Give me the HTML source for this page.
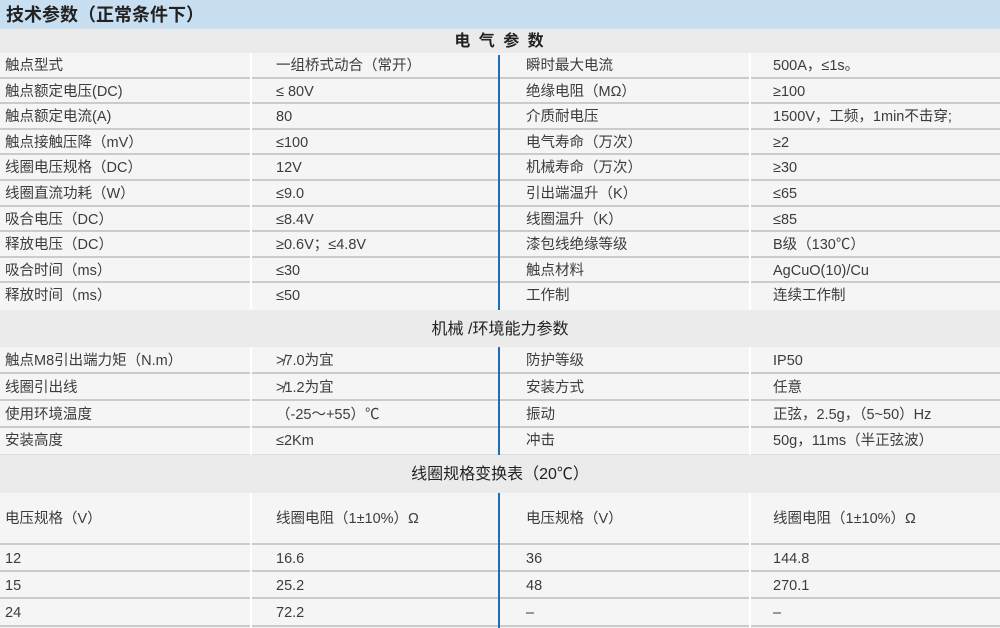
<!DOCTYPE html>
<html><head><meta charset="utf-8"><style>
*{margin:0;padding:0;box-sizing:border-box}
body{width:1000px;height:628px;background:#f5f5f5;font-family:"Liberation Sans","Noto Sans CJK SC",sans-serif;color:#3c3c3c;font-size:14.5px;position:relative;overflow:hidden}
.title{position:absolute;left:0;top:0;width:1000px;height:29px;background:#c8dff2;font-weight:bold;font-size:18px;color:#222;padding-left:6px;line-height:30px}
.hd{position:absolute;left:0;width:1000px;background:#ebebeb;font-size:16px;color:#222;text-align:center}
.sec{position:absolute;left:0;width:1000px}
.r{position:relative;border-bottom:2px solid #cbcbcb;background:#f5f5f5}
.r span{position:absolute;top:0;white-space:nowrap}
.c1{left:5px}.c2{left:276px}.c3{left:526px}.c4{left:773px}
.vl{position:absolute;width:2px;background:#fff}
.bl{position:absolute;left:498px;width:2px;background:#1f6db5}
</style></head><body>
<div class="title">技术参数（正常条件下）</div>
<div class="hd" style="top:29px;height:24px;line-height:26px;letter-spacing:2px;font-weight:bold">电 气 参 数</div>
<div class="sec" style="top:53px">
<div class="r" style="height:25.6px;line-height:26px"><span class="c1">触点型式</span><span class="c2">一组桥式动合（常开）</span><span class="c3">瞬时最大电流</span><span class="c4">500A，≤1s。</span></div>
<div class="r" style="height:25.6px;line-height:26px"><span class="c1">触点额定电压(DC)</span><span class="c2">≤ 80V</span><span class="c3">绝缘电阻（MΩ）</span><span class="c4">≥100</span></div>
<div class="r" style="height:25.6px;line-height:26px"><span class="c1">触点额定电流(A)</span><span class="c2">80</span><span class="c3">介质耐电压</span><span class="c4">1500V，工频，1min不击穿;</span></div>
<div class="r" style="height:25.6px;line-height:26px"><span class="c1">触点接触压降（mV）</span><span class="c2">≤100</span><span class="c3">电气寿命（万次）</span><span class="c4">≥2</span></div>
<div class="r" style="height:25.6px;line-height:26px"><span class="c1">线圈电压规格（DC）</span><span class="c2">12V</span><span class="c3">机械寿命（万次）</span><span class="c4">≥30</span></div>
<div class="r" style="height:25.6px;line-height:26px"><span class="c1">线圈直流功耗（W）</span><span class="c2">≤9.0</span><span class="c3">引出端温升（K）</span><span class="c4">≤65</span></div>
<div class="r" style="height:25.6px;line-height:26px"><span class="c1">吸合电压（DC）</span><span class="c2">≤8.4V</span><span class="c3">线圈温升（K）</span><span class="c4">≤85</span></div>
<div class="r" style="height:25.6px;line-height:26px"><span class="c1">释放电压（DC）</span><span class="c2">≥0.6V；≤4.8V</span><span class="c3">漆包线绝缘等级</span><span class="c4">B级（130℃）</span></div>
<div class="r" style="height:25.6px;line-height:26px"><span class="c1">吸合时间（ms）</span><span class="c2">≤30</span><span class="c3">触点材料</span><span class="c4">AgCuO(10)/Cu</span></div>
<div class="r" style="height:25.6px;line-height:26px;border-bottom:none"><span class="c1">释放时间（ms）</span><span class="c2">≤50</span><span class="c3">工作制</span><span class="c4">连续工作制</span></div>
</div>
<div class="vl" style="left:250px;top:53px;height:257px"></div>
<div class="vl" style="left:749px;top:53px;height:257px"></div>
<div class="bl" style="top:55px;height:255px"></div>
<div class="hd" style="top:310px;height:37px;line-height:40px">机械 /环境能力参数</div>
<div class="sec" style="top:347px">
<div class="r" style="height:27px;line-height:28px"><span class="c1">触点M8引出端力矩（N.m）</span><span class="c2">≯7.0为宜</span><span class="c3">防护等级</span><span class="c4">IP50</span></div>
<div class="r" style="height:27px;line-height:28px"><span class="c1">线圈引出线</span><span class="c2">≯1.2为宜</span><span class="c3">安装方式</span><span class="c4">任意</span></div>
<div class="r" style="height:27px;line-height:28px"><span class="c1">使用环境温度</span><span class="c2">（-25～+55）℃</span><span class="c3">振动</span><span class="c4">正弦，2.5g，（5~50）Hz</span></div>
<div class="r" style="height:27px;line-height:26px;border-bottom:1px solid #ddd"><span class="c1">安装高度</span><span class="c2">≤2Km</span><span class="c3">冲击</span><span class="c4">50g，11ms（半正弦波）</span></div>
</div>
<div class="vl" style="left:250px;top:347px;height:108px"></div>
<div class="vl" style="left:749px;top:347px;height:108px"></div>
<div class="bl" style="top:347px;height:108px"></div>
<div class="hd" style="top:455px;height:38px;line-height:40px">线圈规格变换表（20℃）</div>
<div class="sec" style="top:493px">
<div class="r" style="height:52px;line-height:52px"><span class="c1">电压规格（V）</span><span class="c2">线圈电阻（1±10%）Ω</span><span class="c3">电压规格（V）</span><span class="c4">线圈电阻（1±10%）Ω</span></div>
<div class="r" style="height:27px;line-height:28px"><span class="c1">12</span><span class="c2">16.6</span><span class="c3">36</span><span class="c4">144.8</span></div>
<div class="r" style="height:27px;line-height:28px"><span class="c1">15</span><span class="c2">25.2</span><span class="c3">48</span><span class="c4">270.1</span></div>
<div class="r" style="height:28px;line-height:28px"><span class="c1">24</span><span class="c2">72.2</span><span class="c3">–</span><span class="c4">–</span></div>
</div>
<div class="vl" style="left:250px;top:493px;height:135px"></div>
<div class="vl" style="left:749px;top:493px;height:135px"></div>
<div class="bl" style="top:493px;height:135px"></div>
</body></html>
